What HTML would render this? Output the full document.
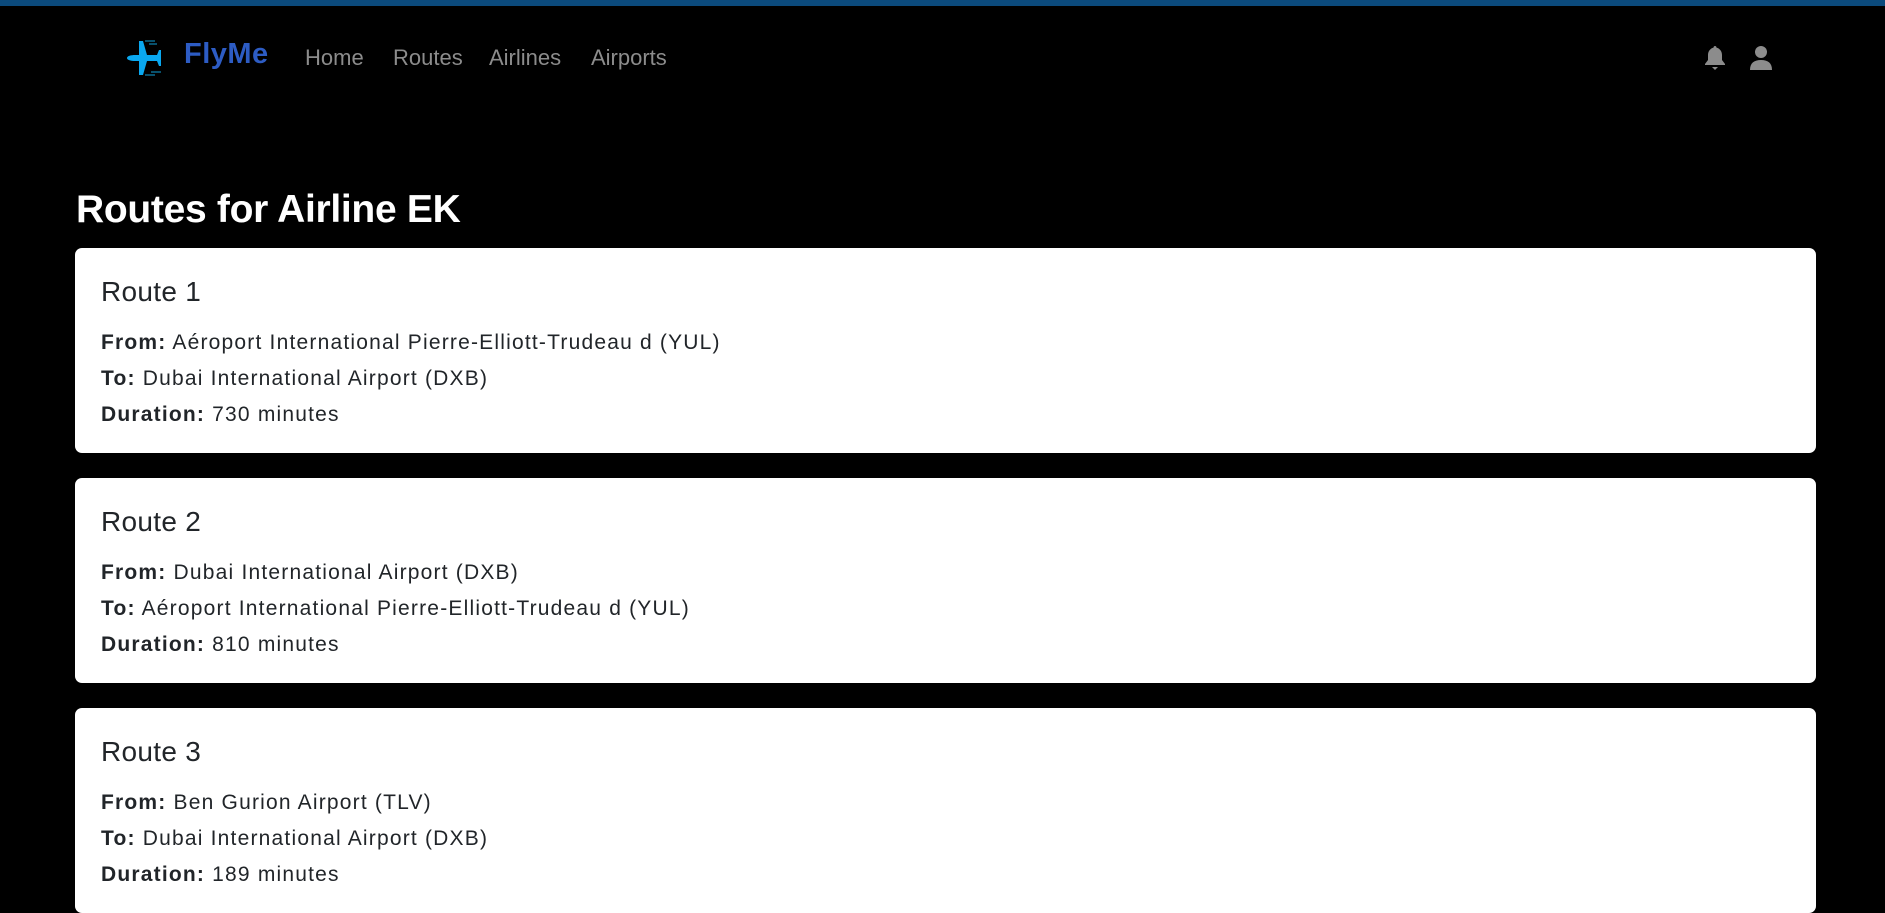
<!DOCTYPE html>
<html><head><meta charset="utf-8"><style>
*{box-sizing:border-box;margin:0;padding:0}
html,body{width:1885px;height:904px;overflow:hidden;background:#000;font-family:"Liberation Sans",sans-serif}
.topbar{position:absolute;left:0;top:0;width:1885px;height:6px;background:#0b4a7c}
.logo{position:absolute;left:123px;top:38px}
.brand{position:absolute;left:184px;top:38px;font-size:29px;font-weight:bold;color:#2d5cc4;letter-spacing:0.5px}
.nav{position:absolute;top:45px;font-size:22px;color:#8c8c8c}
h1{position:absolute;left:76px;top:188px;font-size:39px;font-weight:bold;color:#fff;letter-spacing:-0.3px}
.card{position:absolute;left:75px;width:1741px;height:205px;background:#fff;border-radius:7px;padding:0 26px}
.card h3{position:absolute;left:26px;top:28px;font-size:28px;font-weight:normal;color:#212529;letter-spacing:0.3px}
.card p{position:absolute;left:26px;font-size:21px;color:#212529;white-space:nowrap;letter-spacing:1.2px}
</style></head><body>
<div class="topbar"></div>
<svg class="logo" width="40" height="40" viewBox="0 0 40 40">
<path d="M4 20 C4 18 8 17 12 17 L16 17 L16 3 L20 3 L24 17 L34 17 L36 12 L38 12 L38 28 L36 28 L34 23 L24 23 L20 37 L16 37 L16 23 L12 23 C8 23 4 22 4 20Z" fill="#0aa8f0"/>
<path d="M22 3h10M26 6h8M28 34h10M22 37h10" stroke="#0a6a90" stroke-width="1.5"/>
</svg>
<div class="brand">FlyMe</div>
<div class="nav" style="left:305px">Home</div>
<div class="nav" style="left:393px">Routes</div>
<div class="nav" style="left:489px">Airlines</div>
<div class="nav" style="left:591px">Airports</div>
<svg style="position:absolute;left:1704px;top:45px" width="22" height="26" viewBox="0 0 22 26"><path d="M11 1c1 0 1.5.8 1.5 1.6C16 3.5 18 6.5 18 10v5l3 4v1H1v-1l3-4v-5c0-3.5 2-6.5 5.5-7.4C9.5 1.8 10 1 11 1z" fill="#8c8c8c"/><path d="M8 22h6l-3 3z" fill="#8c8c8c"/></svg>
<svg style="position:absolute;left:1750px;top:45px" width="22" height="26" viewBox="0 0 22 26"><circle cx="11" cy="7" r="6" fill="#8c8c8c"/><path d="M0 25c0-7 4-10 11-10s11 3 11 10z" fill="#8c8c8c"/></svg>
<h1>Routes for Airline EK</h1>

<div class="card" style="top:248px"><h3>Route 1</h3>
<p style="top:83px"><b>From:</b> Aéroport International Pierre-Elliott-Trudeau d (YUL)</p>
<p style="top:119px"><b>To:</b> Dubai International Airport (DXB)</p>
<p style="top:155px"><b>Duration:</b> 730 minutes</p></div>

<div class="card" style="top:478px"><h3>Route 2</h3>
<p style="top:83px"><b>From:</b> Dubai International Airport (DXB)</p>
<p style="top:119px"><b>To:</b> Aéroport International Pierre-Elliott-Trudeau d (YUL)</p>
<p style="top:155px"><b>Duration:</b> 810 minutes</p></div>

<div class="card" style="top:708px"><h3>Route 3</h3>
<p style="top:83px"><b>From:</b> Ben Gurion Airport (TLV)</p>
<p style="top:119px"><b>To:</b> Dubai International Airport (DXB)</p>
<p style="top:155px"><b>Duration:</b> 189 minutes</p></div>
</body></html>
